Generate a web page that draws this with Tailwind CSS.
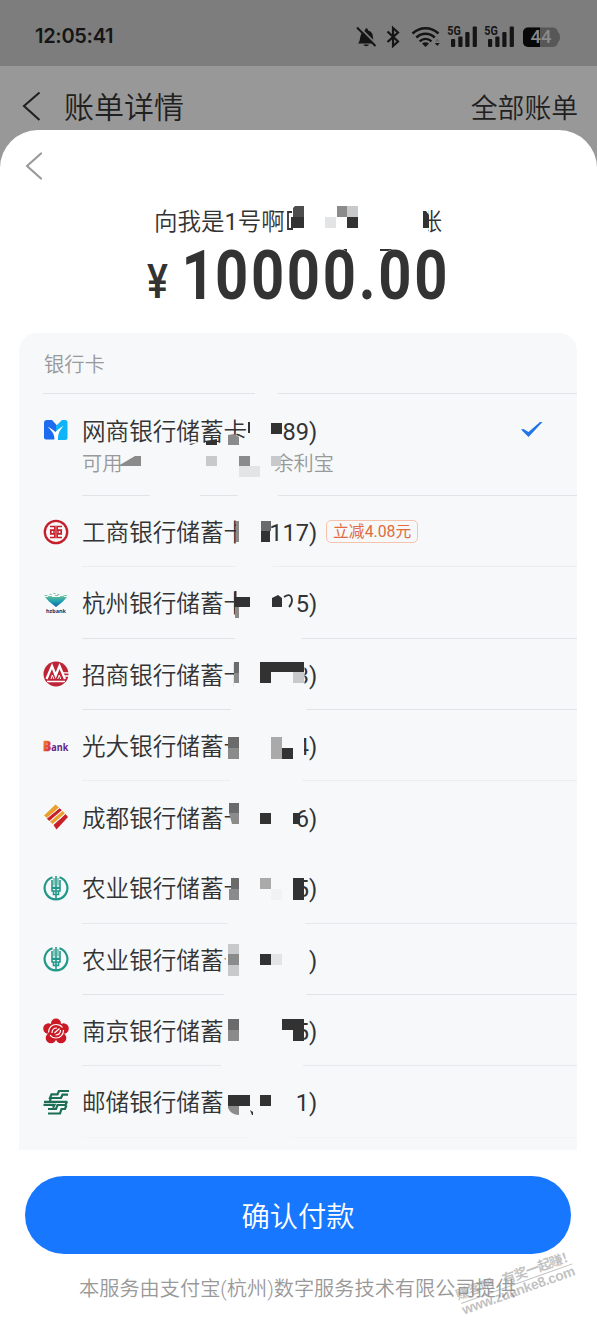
<!DOCTYPE html>
<html lang="zh-CN">
<head>
<meta charset="utf-8">
<meta name="viewport" content="width=device-width, initial-scale=1">
<title>确认付款</title>
<script src="https://cdn.jsdelivr.net/npm/@tailwindcss/browser@4"></script>
</head>
<body class="bg-white font-['Roboto','Noto_Sans_CJK_SC',sans-serif] font-[350] text-[#333]">
<div class="relative w-[597px] h-[1334px] overflow-hidden bg-[#989898]">

  <!-- status bar -->
  <header class="flex h-[66px] items-center justify-between bg-[#7d7d7d] pl-[35px] pr-[36px] pt-[5px] text-[#151515]">
    <span class="font-['Inter'] text-[20px] font-semibold tracking-[-0.300px]">12:05:41</span>
    <svg class="h-[24px] w-[206px]" viewBox="355 23 206 24" fill="#151515">
      <path d="M358 42.500c2.500-2.500 1.500-6.500 3.500-10 .8-1.800 2-2.500 3.500-3 0-2.900 3-2.900 3 0 4 1 5 4 5 7.500 0 2.500 1 4 2.500 5.500zM363.500 43.500h5.500c-.8 2.300-4.700 2.300-5.500 0z"/>
      <path d="M358.500 25.500 377 44" stroke="#7d7d7d" stroke-width="2"/><path d="M357 26.500 375.500 45" stroke="#151515" stroke-width="1.900"/>
      <path d="M387.500 30.500 398 40.500 393 45V27l5 4.500-10.500 9.500" fill="none" stroke="#151515" stroke-width="2.200"/>
      <g fill="none" stroke="#151515" stroke-width="2.500"><path d="M412.500 32.500c7.500-7 18.500-7 26 0M416.300 36.500c5.500-5 13-5 18.500 0M419.700 40.300c3.500-3.200 8.300-3.200 11.800 0"/></g>
      <path d="M422 42.500c2-1.700 5-1.700 7 0l-3.500 3.500zM434.800 42h5l-2.500 3z"/><path d="M434.800 40.500h5l-2.500-3z" fill="#666"/>
      <g id="signal"><rect x="451" y="38" width="4.200" height="8" rx="1"/><rect x="458.300" y="35.500" width="4.200" height="10.500" rx="1"/><rect x="465.300" y="31" width="4.200" height="15" rx="1"/><rect x="472.700" y="25.500" width="4.200" height="20.500" rx="1"/><text x="447.300" y="34" font-family="Roboto" font-weight="700" font-size="12.500" textLength="13.500" lengthAdjust="spacingAndGlyphs">5G</text></g>
      <use href="#signal" x="37"/>
      <rect x="523" y="26.500" width="35" height="19.500" rx="5" fill="#575757"/><path d="M528 26.500h12v19.500h-12a5 5 0 0 1-5-5v-9.500a5 5 0 0 1 5-5z" fill="#080808"/><path d="M557.500 31c3.300 1 3.300 9.500 0 10.500z" fill="#575757"/>
      <text x="530.500" y="42.300" font-family="Roboto" font-weight="500" font-size="17.500" fill="#8a8a8a" textLength="21" lengthAdjust="spacingAndGlyphs">44</text>
    </svg>
  </header>

  <!-- page behind the sheet -->
  <nav class="flex h-[64px] items-center pl-[22px] pr-[19px] pt-[16px] text-[#202020]">
    <svg class="h-[30px] w-[19px]" viewBox="0 0 19 30" fill="none" stroke="#202020" stroke-width="2.100"><path d="M17.500 1.500 2 15l15.500 14"/></svg>
    <span class="ml-[23px] pt-[4px] text-[30px] leading-none">账单详情</span>
    <span class="ml-auto pt-[7px] text-[26.800px] leading-none">全部账单</span>
  </nav>

  <!-- payment sheet -->
  <main class="flex h-[1204px] flex-col rounded-t-[38px] bg-white">
    <div class="h-[72px] pl-[25px] pt-[22px]">
      <svg class="h-[28px] w-[18px]" viewBox="0 0 18 28" fill="none" stroke="#999" stroke-width="2.200" stroke-linecap="round" stroke-linejoin="round"><path d="M16 1.500 2 14l14 12.500"/></svg>
    </div>
    <div class="flex h-[37px] items-center pl-[154px] pt-[4px] text-[23.500px] leading-none">
      <span>向我是<span class="font-normal">1</span>号啊</span><span class="ml-[134px]">账</span>
    </div>
    <div class="flex h-[94px] items-start pl-[147px] leading-none">
      <span class="mt-[19px] w-[31.500px] font-['Roboto'] text-[48px] font-medium"><span class="inline-block origin-left scale-x-[0.820]">¥</span></span>
      <span class="mt-[2px] origin-left scale-x-[0.840] font-['Roboto'] text-[69px] font-bold tracking-[3.200px]"><span class="-mr-[3px] pl-[3px]">1</span>0000.00</span>
    </div>

    <section class="ml-[19px] h-[817px] w-[558px] rounded-t-[18px] bg-[#f6f8fa] text-[23.600px]">
      <h2 class="ml-[24px] flex h-[61px] items-center border-b border-[#e1e3e6] pl-[1px] pt-[4px] text-[20.300px] font-[350] text-[#999]">银行卡</h2>
      <ul>
        <li class="flex h-[102px] pl-[24px]">
          <svg class="mt-[23px] h-[26px] w-[26px]" viewBox="0 0 26 26"><path d="M4 3h5l5 5.500v14H3a2 2 0 0 1-2-2V6a3 3 0 0 1 3-3z" fill="#1c6cf0"/><path d="m13 9 6-6h3a2.500 2.500 0 0 1 2.500 2.500v15a2.500 2.500 0 0 1-2.500 2.500h-9z" fill="#0fb4f8"/><path d="M4.500 9.500c3 1.500 5.500 3.500 8 5.500 2.500-2.500 4.500-4.500 8-6-3.500 4.500-5.500 6-5.500 14h-3.500c0-7-3-9-7-13.500z" fill="#fff"/></svg>
          <div class="ml-[13px] flex-1 border-b border-[#e1e3e6] leading-none">
            <div class="mt-[26px] flex h-[26px] items-center"><span>网商银行储蓄卡</span><span class="w-[70px] text-right font-normal">89)</span>
              <svg class="mb-[7px] ml-[203px] h-[18px] w-[23px]" viewBox="0 0 23 18"><path d="m1 8.500 2.500-.5 5 3L20 1h2.500L8.500 16z" fill="#2275e6"/></svg></div>
            <div class="mt-[8px] flex text-[20.200px] text-[#999]"><span>可用</span><span class="ml-[151px]">余利宝</span></div>
          </div>
        </li>
        <li class="flex h-[71.300px] items-center pl-[24px]">
          <svg class="h-[26px] w-[26px]" viewBox="0 0 26 26" fill="none" stroke="#c51f2b"><circle cx="13" cy="13" r="11.200" stroke-width="2.300"/><path d="M7 7.500h4.900v3.600H7.800v3.800h4.100v3.600H7M19 7.500h-4.900v3.600h4.100v3.800h-4.100v3.600H19M10 13h6" stroke-width="1.700"/></svg>
          <div class="ml-[13px] flex h-full flex-1 items-center border-b border-[#ebedef] pt-[5px]"><span>工商银行储蓄卡</span><span class="w-[70px] text-right font-normal">117)</span><span class="mb-[5px] ml-[9px] flex h-[23px] w-[92px] items-center justify-center rounded-[5px] border border-[#f8c3ad] pt-[1px] text-[15.800px] font-normal leading-none text-[#e06c40]">立减4.08元</span></div>
        </li>
        <li class="flex h-[71.300px] items-center pl-[24px]">
          <svg class="h-[26px] w-[26px]" viewBox="0 0 26 26"><defs><linearGradient id="hz" x2="0" y2="1"><stop stop-color="#55b89a"/><stop offset=".5" stop-color="#189cb5"/><stop offset="1" stop-color="#125b9c"/></linearGradient></defs><path d="M2 7h22l-4 4.500L13 17 6 11.500z" fill="url(#hz)"/><path d="M1.500 5.500h3m2-1h2m2-1h2m2 1h2m4 1h3.500M5 6.500h4m3-1h3m2 1h4" stroke="#7bc5a4" stroke-width="1.200"/><text x="3" y="22.800" font-family="Noto Sans" font-weight="700" font-size="6" fill="#1b315e" textLength="20" lengthAdjust="spacingAndGlyphs">hzbank</text></svg>
          <div class="ml-[13px] flex h-full flex-1 items-center border-b border-[#e1e3e6] pt-[5px]"><span>杭州银行储蓄卡</span><span class="w-[70px] text-right font-normal">95)</span></div>
        </li>
        <li class="flex h-[71.300px] items-center pl-[24px]">
          <svg class="h-[26px] w-[26px]" viewBox="0 0 26 26"><circle cx="13" cy="13" r="12.500" fill="#bd2438"/><path d="M3.500 18 9 5 12.700 14.500 16.500 5 22 18" stroke="#fff" stroke-width="2.300" fill="none"/><path d="m8 18 1.300-4 1.600 4M14.800 18l1.500-4 1.400 4" stroke="#fff" stroke-width="1" fill="none"/><path d="M4 20.500h18M20 11.800H26M21.500 15H26" stroke="#fff" stroke-width="1.300"/></svg>
          <div class="ml-[13px] flex h-full flex-1 items-center border-b border-[#e1e3e6] pt-[5px]"><span>招商银行储蓄卡</span><span class="w-[70px] text-right font-normal">3)</span></div>
        </li>
        <li class="flex h-[71.300px] items-center pl-[24px]">
          <svg class="h-[26px] w-[26px] overflow-visible" viewBox="0 0 26 26"><defs><linearGradient id="bk" x2="1" y2="1"><stop stop-color="#f6a431"/><stop offset=".5" stop-color="#e8502e"/><stop offset="1" stop-color="#b01c6b"/></linearGradient></defs><text x="0" y="17.800" font-family="Open Sans" font-weight="800" font-size="14" fill="url(#bk)" stroke="url(#bk)" stroke-width=".6" textLength="8" lengthAdjust="spacingAndGlyphs">B</text><text x="8.300" y="17.800" font-family="Open Sans" font-weight="700" font-size="11" fill="#652383" textLength="17" lengthAdjust="spacingAndGlyphs">ank</text></svg>
          <div class="ml-[13px] flex h-full flex-1 items-center border-b border-[#eceef0] pt-[5px]"><span>光大银行储蓄卡</span><span class="w-[70px] text-right font-normal">4)</span></div>
        </li>
        <li class="flex h-[71.300px] items-center pl-[24px]">
          <svg class="h-[26px] w-[26px]" viewBox="0 0 26 26"><path d="M1 11.500 12.500.500 16 3.500 4 14z" fill="#eaa12b"/><path d="M3.700 14.600 16.500 4.200l2.500 2L6.300 17z" fill="#c91f28"/><path d="M7 17.600 19.500 6.900l2.500 2.300L9.500 20z" fill="#eaa12b"/><path d="m10.500 21 12-10.900L25 13 13.500 25.500z" fill="#c91f28"/><path d="M3.800 14.400 16.300 3.800M6.600 17.400 19.200 6.600M10 20.500 22.300 9.700" stroke="#f6f8fa" stroke-width=".7"/></svg>
          <div class="ml-[13px] flex h-full flex-1 items-center pt-[5px]"><span>成都银行储蓄卡</span><span class="w-[70px] text-right font-normal">6)</span></div>
        </li>
        <li class="flex h-[71.300px] items-center pl-[24px]">
          <svg class="h-[26px] w-[26px]" viewBox="0 0 26 26" fill="none" stroke="#23988a"><g id="abc"><path d="M9.500 2.200A11.400 11.400 0 1 0 16.500 2.200" stroke-width="2.200"/><path d="M13 1v23M9 5v7.500h8V5M9 11v5h8v-5M10.500 16v3.500h5V16M9 13.200h8" stroke-width="1.600"/><path d="M11 3v7.500M15 3v7.500" stroke-width="1"/></g></svg>
          <div class="ml-[13px] flex h-full flex-1 items-center border-b border-[#e6e8eb] pt-[5px]"><span>农业银行储蓄卡</span><span class="w-[70px] text-right font-normal">5)</span></div>
        </li>
        <li class="flex h-[71.300px] items-center pl-[24px]">
          <svg class="h-[26px] w-[26px]" viewBox="0 0 26 26" fill="none" stroke="#23988a"><use href="#abc"/></svg>
          <div class="ml-[13px] flex h-full flex-1 items-center border-b border-[#e1e3e6] pt-[5px]"><span>农业银行储蓄卡</span><span class="w-[70px] text-right font-normal">)</span></div>
        </li>
        <li class="flex h-[71.300px] items-center pl-[24px]">
          <svg class="h-[26px] w-[26px]" viewBox="0 0 26 26"><g fill="#cb1a26"><circle cx="13" cy="5.500" r="5"/><circle cx="5.500" cy="10.500" r="5.300"/><circle cx="20.500" cy="10.500" r="5.300"/><circle cx="8" cy="20" r="5.300"/><circle cx="18" cy="20" r="5.300"/><circle cx="13" cy="13" r="8"/></g><g fill="none" stroke="#fff" stroke-width="1.200"><path d="M5.500 14.500c0-5 3.500-8 7.500-8 3 0 5 1 6.500 3M20.500 12c0 5-3.500 8-7.500 8-2.500 0-4.500-1-6-3M9 15c0-3.500 2-5 5-5M17.500 12c0 3-2 5-5 5M11.500 15l5-4.500"/></g></svg>
          <div class="ml-[13px] flex h-full flex-1 items-center border-b border-[#e6e8eb] pt-[5px]"><span>南京银行储蓄卡</span><span class="w-[70px] text-right font-normal">5)</span></div>
        </li>
        <li class="flex h-[71.300px] items-center pl-[24px]">
          <svg class="h-[26px] w-[26px]" viewBox="0 0 26 26" fill="none" stroke="#1c6e55" stroke-width="2.200"><path d="M26 2H16l-1.500 3.300H8.500L7 9h11l1.500-3.300H25M24.500 12.800H1M6.500 12.800 8 9.200M24 12.800 22.500 16h-8l-1.500 4H5M.500 15.800h11l-1.500 3M5 24.500h12l1.500-4.500H22l1.500-4"/></svg>
          <div class="ml-[13px] flex h-full flex-1 items-center border-b border-[#f2f4f6] pt-[5px]"><span>邮储银行储蓄卡</span><span class="w-[70px] text-right font-normal">1)</span></div>
        </li>
      </ul>
    </section>

    <button class="ml-[25px] mt-[26px] h-[78px] w-[546px] shrink-0 rounded-full bg-[#1777ff] pt-[7px] text-[28.300px] leading-none text-white">确认付款</button>
    <p class="mr-[2px] mt-[24px] text-center text-[20.200px] leading-[22px] text-[#999]">本服务由支付宝(杭州)数字服务技术有限公司提供</p>
  </main>

  <!-- redaction blocks over private digits -->
  <svg class="pointer-events-none absolute inset-0 h-[1334px] w-[597px]" viewBox="0 0 597 1334" aria-hidden="true">
    <g fill="#fff"><path d="M416 205h12v30h-12z"/></g>
    <g fill="#f6f8fa">
      <path d="M255 391h23v5h-23zM150 492h50v6h-50zM238 492h40v6h-40zM235 565h38v5h-38zM235 636h67v5h-67zM231 707h75v5h-75zM230 778h72v5h-72zM228 920h77v6h-77zM224 991h82v6h-82zM221 1063h82v5h-82zM250 1135h40v5h-40z"/>
      <path d="M239 518h22v28h-22zM236 589h46v30h-46zM234 660h70.500v30h-70.500zM232 733h72v28h-72zM232 803h61v30h-61zM234 874h59v30h-59zM225.500 945h80v30h-80zM224 1016h80v30h-80zM224 1087h72v30h-72z"/>
      <path d="M281 589h14.500v30h-14.500z"/>
    </g>
    <g fill="#323232">
      <path d="M291 217h13v11h-13zM347 217h11v11h-11zM423 211h3l3 4v13h-6zM343 249h4v3zM380 249h13l-5 2h-8z"/>
      <path d="M248 422h2v11h-2zM271 423h11v11h-11zM206 441l11-2v6h-11zM189 444l7-1-5 2z"/>
      <path d="M261 531h9v11h-9zM234 597h16v10h-16zM272 598l6-3 4 3v9h-10z"/>
      <path d="M260 662h44v10h-33v11h-11zM282 748h11v11h-11zM260 813h11v11h-11zM293 813h7v11h-7zM293 878h11v22h-11zM260 954h11v11h-11zM282 1019h22v22h-11v-11h-11zM228 1095h22v11h-22zM260 1095h11v11h-11zM250 1110l3 2v3h-1z"/>
    </g>
    <path d="M235.500 591v20" stroke="#333" stroke-width="2"/>
    <path d="M292 212h-4v17h5" fill="none" stroke="#333" stroke-width="1.800"/>
    <path d="M295 206h9v11h-11v-9z" fill="#4d4d4d"/>
    <g fill="#8b8b8b"><path d="M337 206h10v11h-10z"/><path d="M228 435l6-1 5 3v8h-11zM118 466l17-10h6v10zM239 456h11v10h-11zM236 521h3v21h-3zM235 607h4v11h-4zM234 673h5v10h-5zM228 748h11v11h-11zM229 813h10v11h-7zM229 889h10v11h-10zM228 954h11v11h-11zM228 1030h11v11h-11zM228 1106h11v9q-8 0-11-7z"/></g>
    <g fill="#6b6b6b"><path d="M261 521h10v10h-10zM234 662h5v11h-5zM228 737h11v11h-11zM229 803h10v10h-10zM231 878h8v11h-8zM228 1019h11v11h-11z"/></g>
    <g fill="#aaa"><path d="M271 737h11v22h-11zM260 878h11v11h-11z"/></g>
    <g fill="#c8c9ca"><path d="M347 206h11v11h-11zM206 456h11v10h-11zM271 456h10v10h-10zM293 672h11v11h-11zM228 944h11v10h-11zM228 965h11v11h-11z"/></g>
    <g fill="#e3e4e5"><path d="M325 217h11v11h-11zM239 466h21v11h-21zM271 954h11v11h-11z"/></g>
    <path d="M271 889h11v11h-11z" fill="#f0f2f3"/>
    <path d="M284 597q7-5 8 3 0 4-3 7" fill="none" stroke="#333" stroke-width="1.800"/>
  </svg>

  <!-- site watermark -->
  <svg class="pointer-events-none absolute bottom-0 right-0 h-[94px] w-[150px]" viewBox="447 1240 150 94" aria-hidden="true">
    <g transform="translate(461 1303) rotate(-19.600)" fill="#8e8e8e" fill-opacity=".55" font-family="'Noto Sans CJK SC',sans-serif" font-weight="700">
      <text x="-2" y="-4" font-size="13" textLength="39">赚客吧</text><text x="47" y="-3" font-size="13.500" textLength="76">有奖一起赚！</text>
      <path d="M0 0h118v1H0z"/>
      <text x="-1" y="12" font-family="Liberation Sans" font-size="14" textLength="119">www.zuanke8.com</text>
    </g>
  </svg>
</div>
</body>
</html>
